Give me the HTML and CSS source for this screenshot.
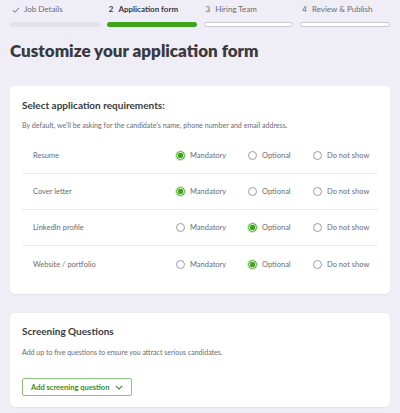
FILE: index.html
```html
<!DOCTYPE html>
<html>
<head>
<meta charset="utf-8">
<link rel="stylesheet" href="styles.css">
</head>
<body>
<div class="page">
  <div class="stepper">
    <div class="step">
      <div class="step-label"><svg class="check" width="8" height="6" viewBox="0 0 8 6"><path d="M0.8 3.2 L3 5.2 L7.2 0.8" fill="none" stroke="#6b6c72" stroke-width="1"/></svg>Job Details</div>
      <div class="bar bar-done"></div>
    </div>
    <div class="step">
      <div class="step-label active"><span class="num">2</span>Application form</div>
      <div class="bar bar-active"></div>
    </div>
    <div class="step">
      <div class="step-label"><span class="num">3</span>Hiring Team</div>
      <div class="bar bar-todo"></div>
    </div>
    <div class="step">
      <div class="step-label"><span class="num">4</span>Review &amp; Publish</div>
      <div class="bar bar-todo"></div>
    </div>
  </div>

  <h1 class="title">Customize your application form</h1>

  <section class="card card-req">
    <h2 class="card-title">Select application requirements:</h2>
    <p class="card-desc">By default, we'll be asking for the candidate's name, phone number and email address.</p>
    <div class="rows">
      <div class="row">
        <div class="row-label">Resume</div>
        <div class="opt"><span class="radio on"></span>Mandatory</div>
        <div class="opt"><span class="radio"></span>Optional</div>
        <div class="opt"><span class="radio"></span>Do not show</div>
      </div>
      <div class="row">
        <div class="row-label">Cover letter</div>
        <div class="opt"><span class="radio on"></span>Mandatory</div>
        <div class="opt"><span class="radio"></span>Optional</div>
        <div class="opt"><span class="radio"></span>Do not show</div>
      </div>
      <div class="row">
        <div class="row-label">LinkedIn profile</div>
        <div class="opt"><span class="radio"></span>Mandatory</div>
        <div class="opt"><span class="radio on"></span>Optional</div>
        <div class="opt"><span class="radio"></span>Do not show</div>
      </div>
      <div class="row">
        <div class="row-label">Website / portfolio</div>
        <div class="opt"><span class="radio"></span>Mandatory</div>
        <div class="opt"><span class="radio on"></span>Optional</div>
        <div class="opt"><span class="radio"></span>Do not show</div>
      </div>
    </div>
  </section>

  <section class="card card-screen">
    <h2 class="card-title">Screening Questions</h2>
    <p class="card-desc small">Add up to five questions to ensure you attract serious candidates.</p>
    <button class="btn">Add screening question<svg class="chev" width="8" height="5" viewBox="0 0 8 5"><path d="M0.8 0.8 L4 4 L7.2 0.8" fill="none" stroke="#3a8a26" stroke-width="1.1"/></svg></button>
  </section>
</div>
</body>
</html>
```

FILE: styles.css
```css
* { box-sizing: border-box; }
html, body {
  margin: 0;
  padding: 0;
  background: #efedf5;
}
body {
  font-family: Lato, "Open Sans", sans-serif;
  color: #393a3d;
  width: 400px;
  height: 413px;
  overflow: hidden;
}
.page {
  padding: 0 10px;
}
.stepper {
  display: grid;
  grid-template-columns: repeat(4, 1fr);
  column-gap: 7px;
  padding-top: 4px;
}
.step-label {
  font-size: 8px;
  color: #6b6c72;
  height: 11px;
  line-height: 11px;
  display: flex;
  align-items: center;
  padding-left: 2px;
  white-space: nowrap;
}
.step-label.active { color: #393a3d; font-weight: 700; }
.step-label .num { margin-right: 5px; }
.check { margin-right: 4px; }
.bar {
  margin-top: 7px;
  height: 5px;
  border-radius: 3px;
}
.bar-done { background: #e3e1ea; }
.bar-active { background: #3fa41b; }
.bar-todo { background: #fff; border: 1px solid #c9c7d0; }

.title {
  margin: 14px 0 0;
  font-size: 17px;
  font-weight: 800;
  line-height: 20px;
  color: #393a3d;
}
.card {
  background: #fff;
  border-radius: 5px;
  box-shadow: 0 1px 2px rgba(0,0,0,0.06);
  padding: 12px 12px;
}
.card-req { margin-top: 25px; padding-bottom: 12px; }
.card-title {
  margin: 0;
  font-size: 10px;
  font-weight: 700;
  line-height: 14px;
}
.card-desc {
  margin: 8px 0 0;
  font-size: 7.1px;
  color: #6b6c72;
  line-height: 12px;
}
.rows { margin-top: 6px; }
.row {
  display: grid;
  grid-template-columns: 154px 72px 65px 65px;
  align-items: center;
  height: 36px;
  border-bottom: 1px solid #eceaf0;
  font-size: 7.5px;
  color: #6b6c72;
}
.row:last-child { border-bottom: none; }
.row-label { padding-left: 11px; }
.opt {
  display: flex;
  align-items: center;
  white-space: nowrap;
}
.radio {
  width: 9px;
  height: 9px;
  border-radius: 50%;
  border: 1px solid #9d9ca4;
  margin-right: 5px;
  flex: none;
  background: #fff;
}
.radio.on {
  border-color: #3fa41b;
  background: radial-gradient(circle, #3fa41b 0 2.6px, #fff 3px);
  box-shadow: 0 0 0 1px #d6ecd0;
}
.card-screen {
  margin-top: 19px;
  padding-top: 11px;
  padding-bottom: 11px;
}
.card-desc.small { font-size: 7px; margin-top: 8px; }
.btn {
  margin-top: 20px;
  display: flex;
  align-items: center;
  gap: 6px;
  height: 18px;
  padding: 0 8px;
  background: #fff;
  border: 1px solid #8cc07c;
  border-radius: 2px;
  font-family: inherit;
  font-size: 7.5px;
  font-weight: 700;
  color: #3a8a26;
}
```
